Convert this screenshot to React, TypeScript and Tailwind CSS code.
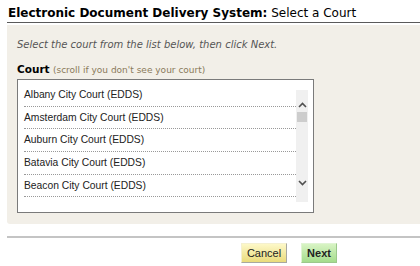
const courts = [
  "Albany City Court (EDDS)",
  "Amsterdam City Court (EDDS)",
  "Auburn City Court (EDDS)",
  "Batavia City Court (EDDS)",
  "Beacon City Court (EDDS)",
];

const Chevron = ({ up }: { up?: boolean }) => (
  <svg width="9" height="6" viewBox="0 0 9 6" className="block">
    <path
      d={up ? "M1 5 L4.5 1.5 L8 5" : "M1 1 L4.5 4.5 L8 1"}
      fill="none"
      stroke="#505050"
      strokeWidth="1.6"
    />
  </svg>
);

const App = () => {
  return (
    <div className="w-[420px] h-[266px] bg-white overflow-hidden font-['DejaVu_Sans',Verdana,sans-serif]">
      <div className="pl-[7px]">
        <h1 className="h-[23px] pt-[5px] pl-px border-b-[1.5px] border-[#5a5a5a] text-[12px] leading-[16px] text-black whitespace-nowrap">
          <span className="font-bold">Electronic Document Delivery System:</span>{" "}
          <span>Select a Court</span>
        </h1>
        <div className="mt-[2px] h-[199px] bg-[#f2efe8] rounded-bl-[3px] pl-[10px] pt-[13px]">
          <p className="text-[10px] leading-[14px] italic text-[#555]">
            Select the court from the list below, then click Next.
          </p>
          <p className="mt-[10px] text-[10.5px] leading-[14px] text-black whitespace-nowrap">
            <span className="font-bold">Court</span>{" "}
            <span className="text-[9px] text-[#8a7a5a]">(scroll if you don't see your court)</span>
          </p>
          <div className="mt-[2px] w-[297px] h-[134px] bg-white border border-[#7a7a7a] flex pl-[6px] pr-[4px]">
            <ul className="w-[272px] pt-[4px] font-['Liberation_Sans',Arial,sans-serif] text-[10.3px] text-[#222]">
              {courts.map((c) => (
                <li
                  key={c}
                  className="h-[22.7px] pt-[5px] leading-[12px] border-b border-dotted border-[#999]"
                >
                  {c}
                </li>
              ))}
            </ul>
            <div className="mt-[10px] w-[12px] h-[112px] bg-[#f0f0f0] flex flex-col items-center">
              <div className="mt-[12px]">
                <Chevron up />
              </div>
              <div className="mt-[4px] w-[10px] h-[10px] bg-[#cdcdcd]" />
              <div className="mt-[58px]">
                <Chevron />
              </div>
            </div>
          </div>
        </div>
        <div className="mt-[12px] h-[2px] bg-[#c4c4c4]" />
        <div className="mt-[5px] flex pl-[234px] gap-[14px] font-['Liberation_Sans',Arial,sans-serif] text-[11px]">
          <button className="w-[46px] h-[20px] border border-t-[#f4f0d0] border-l-[#f4f0d0] border-r-[#a8a8a0] border-b-[#a8a8a0] bg-gradient-to-b from-[#fdf8c8] to-[#eadb7a] text-[#222]">
            Cancel
          </button>
          <button className="w-[36px] h-[20px] border border-t-[#e0f4d4] border-l-[#e0f4d4] border-r-[#9cc88c] border-b-[#9cc88c] bg-gradient-to-b from-[#d8f4c4] to-[#a4dc8c] font-bold text-[#222]">
            Next
          </button>
        </div>
      </div>
    </div>
  );
};

export default App;
